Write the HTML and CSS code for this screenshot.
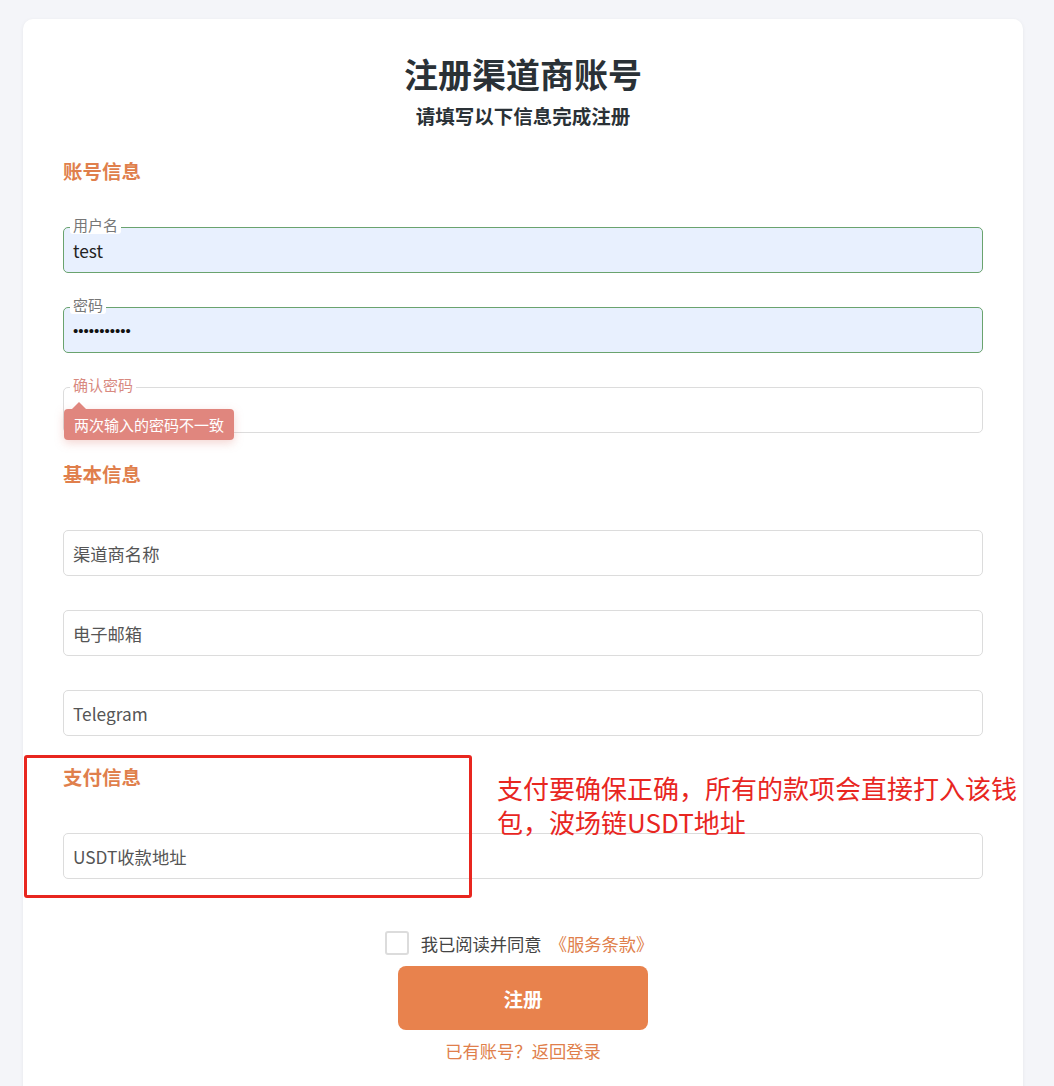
FILE: index.html
```html
<!DOCTYPE html>
<html lang="zh-CN">
<head>
<meta charset="utf-8">
<title>注册渠道商账号</title>
<link rel="stylesheet" href="styles.css">
</head>
<body>
<div class="card">
  <h1 class="title">注册渠道商账号</h1>
  <p class="subtitle">请填写以下信息完成注册</p>

  <h2 class="section">账号信息</h2>
  <div class="field filled first">
    <span class="flabel">用户名</span>
    <span class="value">test</span>
  </div>
  <div class="field filled">
    <span class="flabel">密码</span>
    <span class="value dots">•••••••••••</span>
  </div>
  <div class="field">
    <span class="flabel err">确认密码</span>
    <div class="tip">两次输入的密码不一致</div>
  </div>

  <h2 class="section">基本信息</h2>
  <div class="field first"><span class="ph">渠道商名称</span></div>
  <div class="field"><span class="ph">电子邮箱</span></div>
  <div class="field"><span class="ph">Telegram</span></div>

  <h2 class="section">支付信息</h2>
  <div class="field first"><span class="ph">USDT收款地址</span></div>

  <div class="agree">
    <span class="box"></span>
    <span class="agree-text">我已阅读并同意</span>
    <span class="terms">《服务条款》</span>
  </div>
  <div class="btn-row"><button class="btn">注册</button></div>
  <div class="back">已有账号？返回登录</div>
</div>

<div class="mark"></div>
<div class="note">支付要确保正确，所有的款项会直接打入该钱包，波场链USDT地址</div>
</body>
</html>
```
FILE: styles.css
```css
* { box-sizing: border-box; }
html, body { margin: 0; padding: 0; }
body {
  background: #f4f5f9;
  font-family: "Noto Sans CJK SC", "Noto Sans", sans-serif;
  color: #333;
  padding: 19px 31px 0 23px;
  height: 1086px;
  overflow: hidden;
  position: relative;
}
.card {
  width: 1000px;
  background: #fff;
  border-radius: 10px;
  box-shadow: 0 1px 4px rgba(0,0,0,0.06);
  padding: 32px 40px 40px;
}
.title {
  margin: 0;
  text-align: center;
  font-size: 34px;
  line-height: 46px;
  font-weight: 700;
  color: #2a3136;
}
.subtitle {
  margin: 6px 0 0;
  text-align: center;
  font-size: 19.5px;
  line-height: 26px;
  font-weight: 700;
  color: #2a3136;
}
.section {
  margin: 28px 0 0;
  font-size: 19.5px;
  line-height: 26px;
  font-weight: 700;
  color: #e07f4c;
}
.subtitle + .section { margin-top: 29px; }
.field {
  position: relative;
  height: 46px;
  border: 1px solid #dcdcdc;
  border-radius: 5px;
  margin-top: 34px;
  display: flex;
  align-items: center;
  padding: 0 9px;
  font-size: 17.3px;
}
.field.first { margin-top: 43px; }
.field.filled {
  background: #e8f0fe;
  border-color: #6aa36e;
}
.flabel {
  position: absolute;
  left: 6px;
  top: -13px;
  padding: 0 3px;
  background: #fff;
  border-radius: 3px;
  font-size: 15px;
  line-height: 19px;
  color: #777;
}
.flabel.err { color: #d8897f; }
.value { color: #222; }
.dots {
  font-family: "Liberation Sans", sans-serif;
  font-size: 15px;
  color: #111;
}
.ph { color: #555; }
.tip {
  position: absolute;
  left: 0;
  top: 21px;
  width: 170px;
  height: 31px;
  background: #e0867e;
  color: #fff;
  border-radius: 4px;
  font-size: 15px;
  line-height: 31px;
  padding-left: 10px;
  box-shadow: 0 3px 10px rgba(224,134,126,0.35);
}
.tip::before {
  content: "";
  position: absolute;
  left: 8px;
  top: -7px;
  border-left: 7px solid transparent;
  border-right: 7px solid transparent;
  border-bottom: 7px solid #e0867e;
}
.agree {
  margin-top: 52px;
  display: flex;
  justify-content: center;
  align-items: center;
  height: 24px;
  font-size: 17.3px;
  padding-right: 8px;
}
.box {
  width: 24px;
  height: 24px;
  border: 2px solid #dcdcdc;
  border-radius: 3px;
  margin-right: 12px;
}
.agree-text { color: #444; margin-right: 8px; }
.terms { color: #e07f4c; }
.btn-row {
  display: flex;
  justify-content: center;
  margin-top: 11px;
}
.btn {
  width: 250px;
  height: 64px;
  border: 0;
  border-radius: 8px;
  background: #e8824d;
  color: #fff;
  font-family: inherit;
  font-size: 19.5px;
  font-weight: 700;
}
.back {
  margin-top: 10px;
  text-align: center;
  font-size: 17.3px;
  line-height: 22px;
  color: #e07f4c;
}
.mark {
  position: absolute;
  left: 24px;
  top: 755px;
  width: 448px;
  height: 143px;
  border: 3px solid #e8261f;
  border-radius: 3px;
}
.note {
  position: absolute;
  left: 497px;
  top: 771px;
  width: 526px;
  font-size: 26px;
  line-height: 34px;
  color: #e8261f;
}
```
